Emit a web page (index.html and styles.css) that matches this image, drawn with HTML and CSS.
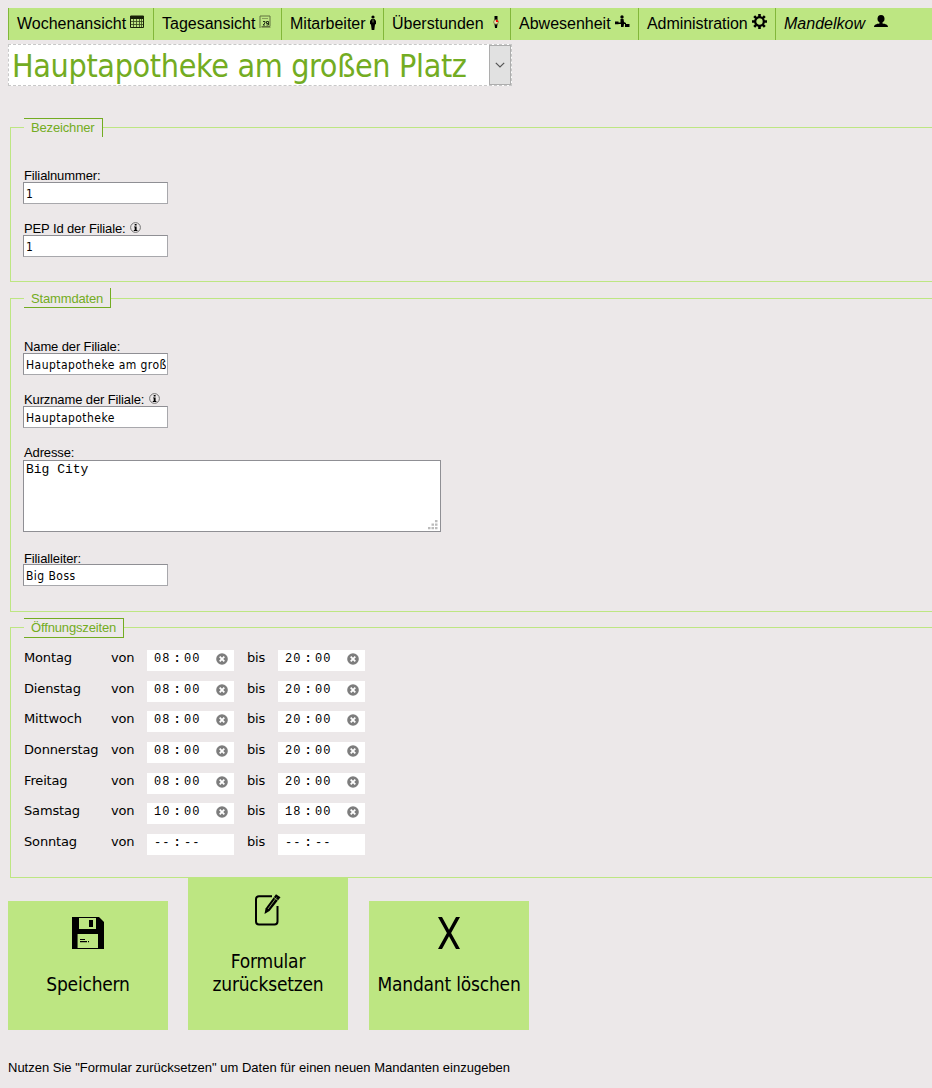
FILE: index.html
```html
<!DOCTYPE html>
<html lang="de">
<head>
<meta charset="utf-8">
<title>Mandanten</title>
<link rel="stylesheet" href="styles.css">
</head>
<body>
<nav class="nav">
  <a class="nav-item week">Wochenansicht
    <svg class="icon" width="14" height="14" viewBox="0 0 14 14"><path d="M.5 1h13v11.500h-13z" fill="none" stroke="#182008"/><path d="M0 1h14v3H0z" fill="#182008"/><path d="M1 6.500h12M1 9.500h12M3.500 4v8M6.500 4v8M9.500 4v8M11.500 4v8" stroke="#34451c" stroke-width=".8"/></svg></a>
  <a class="nav-item day">Tagesansicht
    <svg class="icon" width="13" height="14" viewBox="0 0 13 14"><path d="M1 13V1h10v10.500H2.500" fill="none" stroke="#60733f"/><path d="M3 3.500h6M2.500 12.500h9" stroke="#879f5b"/><path d="M4 6.500h2v1.500l-2 2h2M7.500 6.500h2v2h-2zM9.500 8v2h-2" fill="none" stroke="#26331a"/></svg></a>
  <a class="nav-item staff">Mitarbeiter
    <svg class="icon" width="6" height="15" viewBox="0 0 6 15"><circle cx="3" cy="2" r="1.600"/><path d="M1.500 4h3L6 6v3l-1 .5L4.300 15H1.700L1 9.500 0 9V6z"/><path d="M3 4.500v3" stroke="#bde682" stroke-width=".6"/></svg></a>
  <a class="nav-item overtime">Überstunden
    <svg class="icon" width="8" height="14" viewBox="0 0 8 14"><path d="M2.500 1h3v4h-3zM2.500 9h3l-.5 4H3z"/><circle cx="4" cy="7" r="2.300" fill="#e4e5b0" stroke="#746a33" stroke-width=".8"/><path d="M4 7V4.800A2.300 2.300 0 0 1 6.300 7z" fill="#f00"/></svg></a>
  <a class="nav-item absence">Abwesenheit
    <svg class="icon" width="15" height="13" viewBox="0 0 15 13"><circle cx="7" cy="2" r="1.700"/><path d="M5.500 4h3l.5 3 2 1v1H9l-.5 3h-2L6 9H2V7.500h3.500z"/><path d="M0 6.500h3.500v2.700H0zM10 9h4.500v3H10zM6 9h2v3H6z"/></svg></a>
  <a class="nav-item admin">Administration
    <svg class="icon" width="15" height="15" viewBox="0 0 15 15"><circle cx="7.500" cy="7.500" r="4.300" fill="none" stroke="#000" stroke-width="2.200"/><path d="M7.500 0v3M7.500 12v3M0 7.500h3M12 7.500h3M2.200 2.200l2 2M10.800 10.800l2 2M12.800 2.200l-2 2M4.200 10.800l-2 2" stroke="#000" stroke-width="2.600"/></svg></a>
  <a class="nav-item user"><em>Mandelkow</em>
    <svg class="icon" width="14" height="13" viewBox="0 0 14 13"><ellipse cx="7" cy="3.800" rx="3.500" ry="3.800"/><path d="M5.500 7h3v1.500c3 .3 5.500 1.200 5.500 3.500H0c0-2.300 2.500-3.200 5.500-3.500z"/></svg></a>
</nav>
<div class="branch-select">
  <span class="branch-name">Hauptapotheke am großen Platz</span>
  <span class="select-button"><svg width="10" height="6" viewBox="0 0 10 6"><path d="M.8.8 5 5 9.200.8" fill="none" stroke="#555" stroke-width="1.200"/></svg></span>
</div>
<form>
  <fieldset class="group ids">
    <legend class="legend">Bezeichner</legend>
    <div class="field"><label>Filialnummer:</label><input class="text" value="1"></div>
    <div class="field"><label>PEP Id der Filiale: <svg class="info" width="11" height="11" viewBox="0 0 11 11"><circle cx="5.500" cy="5.500" r="4.900" fill="none" stroke="#666" stroke-width=".9"/><path d="M4.700 1.900h1.900v1.500H4.700zM4 4.400h2.600v3.700h.8v.8H3.800v-.8h.9V5.200H4z"/></svg></label><input class="text" value="1"></div>
  </fieldset>
  <fieldset class="group master">
    <legend class="legend">Stammdaten</legend>
    <div class="field"><label>Name der Filiale:</label><input class="text" value="Hauptapotheke am großen Platz"></div>
    <div class="field"><label>Kurzname der Filiale: <svg class="info" width="11" height="11" viewBox="0 0 11 11"><circle cx="5.500" cy="5.500" r="4.900" fill="none" stroke="#666" stroke-width=".9"/><path d="M4.700 1.900h1.900v1.500H4.700zM4 4.400h2.600v3.700h.8v.8H3.800v-.8h.9V5.200H4z"/></svg></label><input class="text" value="Hauptapotheke"></div>
    <div class="field address"><label>Adresse:</label><div class="textarea"><span>Big City</span><svg class="grip" width="10" height="10" viewBox="0 0 10 10" fill="#bbb"><path d="M7 0h2.500v2.300H7zM7 3.500h2.500v2.300H7zM7 7h2.500v2.300H7zM3.500 3.500H6v2.300H3.500zM3.500 7H6v2.300H3.500zM0 7h2.500v2.300H0z"/></svg></div></div>
    <div class="field leader"><label>Filialleiter:</label><input class="text" value="Big Boss"></div>
  </fieldset>
  <fieldset class="group hours">
    <legend class="legend">Öffnungszeiten</legend>
    <div class="days" id="days"></div>
  </fieldset>
  <div class="buttons">
    <div class="button save">
      <svg width="32" height="32" viewBox="0 0 32 32"><path d="M0 0h27l5 5v27H0z"/><path d="M7 1h17v11H7zM6 17h20v14H6z" fill="#bde682"/><path d="M17 3h4v7h-4zM8 22h5v1H8zM8 24h7v1.300H8zM16 24h1v1.300h-1z"/><path d="M5.500 17v14" stroke="#52653a"/></svg>
      <span>Speichern</span>
    </div>
    <div class="button reset">
      <svg width="26" height="32" viewBox="0 0 26 32"><path d="M17 2.200H4A3 3 0 0 0 1 5v22.500a3 3 0 0 0 3 3h15.500a3 3 0 0 0 3-3V12" fill="none" stroke="#000" stroke-width="2"/><path d="m9.500 20 1-5.500L21 .2l4.500 3L14.500 17z"/><path d="m13 15 8.500-11.500M19 3.500l4 3" stroke="#9fc36d" stroke-width=".8"/></svg>
      <span>Formular<br>zurücksetzen</span>
    </div>
    <div class="button delete">
      <svg width="22" height="32" viewBox="0 0 22 32"><path d="M0 0h4L11 12.800 18 0h4l-8.900 16L22 32h-4L11 19.200 4 32H0l8.900-16z"/></svg>
      <span>Mandant löschen</span>
    </div>
  </div>
</form>
<p class="hint">Nutzen Sie "Formular zurücksetzen" um Daten für einen neuen Mandanten einzugeben</p>
<script src="hours.js"></script>
</body>
</html>
```
FILE: styles.css
```css
* { box-sizing: border-box; }
html { overflow: hidden; }
body {
  margin: 0;
  padding: 8px 0 0 8px;
  height: 1088px;
  overflow: hidden;
  background: #ece8e9;
  color: #000;
  font: 13px "Liberation Sans", Arial, sans-serif;
}
.nav {
  display: flex;
  height: 32px;
  margin-bottom: 4px;
  background: #bde682;
  font-size: 16px;
}
.nav-item {
  display: flex;
  flex: none;
  padding: 6px 0 0 8px;
  border-left: 1px solid #82b73a;
  line-height: 19px;
  white-space: nowrap;
}
.icon { margin: 1px 0 0 4px; }
.week { width: 145px; }
.day { width: 128px; }
.staff { width: 102px; }
.overtime { width: 127px; }
.overtime .icon { margin-left: 8px; }
.absence { width: 128px; }
.admin { width: 137px; letter-spacing: -.05px; }
.admin .icon { margin-top: 0; }
.user .icon { margin-left: 9px; }

.branch-select {
  display: flex;
  justify-content: space-between;
  width: 504px;
  height: 42px;
  border: 1px dashed #c8c8c8;
  background: #fff;
}
.branch-name {
  padding-left: 3px;
  color: #73ac22;
  font: 32px/42px "DejaVu Sans Condensed", "DejaVu Sans", sans-serif;
  font-stretch: condensed;
  letter-spacing: -.35px;
  white-space: nowrap;
}
.select-button {
  display: flex;
  align-items: center;
  justify-content: center;
  width: 22px;
  border: 1px solid #adadad;
  background: #e1e1e1;
}

form { margin-top: 32px; }
.group {
  width: 960px;
  margin: 0 0 6px 2px;
  padding: 0 0 0 13px;
  border: 1px solid #bde682;
}
.ids { height: 164px; }
.master { height: 324px; }
.hours { height: 260px; margin-bottom: 0; }
.legend {
  height: 20px;
  padding: 0 7px 0 7px;
  border: 0 solid #73ac22;
  color: #73ac22;
  letter-spacing: -.15px;
  line-height: 18px;
}
.ids .legend { height: 19px; border-width: 1px 1px 0 0; }
.master .legend { border-width: 0 1px 1px 0; padding-top: 2px; }
.hours .legend { height: 19.800px; border-width: 1px 1px 1px 0; }

.field { height: 53px; }
.legend + .field { margin-top: 31px; }
.field label { display: block; height: 14px; line-height: 15px; letter-spacing: -.12px; }
.info { margin-left: 1px; }
.text {
  display: block;
  width: 145px;
  height: 22px;
  margin: 0 0 0 -1px;
  padding: 1px 1px 0 2px;
  border: 1px solid #8f8f94;
  border-right-color: #a8a8ac;
  border-bottom-color: #a8a8ac;
  border-radius: 0;
  background: #fff;
  color: #000;
  font: 12px "DejaVu Sans Condensed", "DejaVu Sans", sans-serif;
  font-stretch: condensed;
  letter-spacing: .45px;
}
.leader .text { margin-top: -1px; }
.address { height: 106px; }
.textarea {
  position: relative;
  width: 418px;
  height: 72px;
  margin: 1px 0 0 -1px;
  padding: 1px 2px;
  border: 1px solid #8f8f94;
  background: #fff;
  font: 13px/15px "Liberation Mono", monospace;
}
.grip { position: absolute; right: 2px; bottom: 1px; }

.days {
  display: grid;
  grid-auto-rows: 30.600px;
  padding-top: 12.500px;
  font: 13px/15px "DejaVu Sans", Verdana, sans-serif;
  letter-spacing: -.15px;
}
.day-row {
  display: grid;
  grid-template-columns: 87px 36px 100px 31px 87px;
}
.time {
  display: flex;
  width: 87px;
  height: 21px;
  padding: 3px 6px 0 7px;
  background: #fff;
  font: 12px/12px "Liberation Mono", monospace;
  white-space: pre;
}
.time .colon { width: 14px; text-align: center; font-weight: bold; }
.time .num { width: 16px; letter-spacing: 1px; }
.time svg { margin: 0 0 0 auto; }

.buttons { display: flex; align-items: flex-end; height: 152px; }
.button {
  display: flex;
  flex-direction: column;
  align-items: center;
  width: 160px;
  height: 129px;
  padding-top: 16px;
  background: #bde682;
  font: 19px/23px "DejaVu Sans Condensed", "DejaVu Sans", sans-serif;
  font-stretch: condensed;
  letter-spacing: -.2px;
  text-align: center;
  white-space: nowrap;
}
.button span { margin-top: 24px; }
.reset { height: 152px; margin: 0 21px 0 20px; }
.hint { margin: 30px 0 0; line-height: 15px; }
```
FILE: hours.js
```js
const clear = '<svg width="12" height="12" viewBox="0 0 12 12"><circle cx="6" cy="6" r="5.800" fill="#7d7d7d"/><path d="m3.700 3.700 4.600 4.600M8.300 3.700 3.700 8.300" stroke="#fff" stroke-width="1.800"/></svg>';
const time = (h, m) => `<span class="time"><span class="num">${h}</span><span class="colon">:</span><span class="num">${m}</span>${h === '--' ? '' : clear}</span>`;
const rows = [
  ['Montag', '08', '20'], ['Dienstag', '08', '20'], ['Mittwoch', '08', '20'],
  ['Donnerstag', '08', '20'], ['Freitag', '08', '20'], ['Samstag', '10', '18'],
  ['Sonntag', '--', '--']
];
document.getElementById('days').innerHTML = rows.map(([day, from, to]) => {
  const m = from === '--' ? '--' : '00';
  return `<div class="day-row"><span>${day}</span><span>von</span>${time(from, m)}<span>bis</span>${time(to, m)}</div>`;
}).join('');
```
